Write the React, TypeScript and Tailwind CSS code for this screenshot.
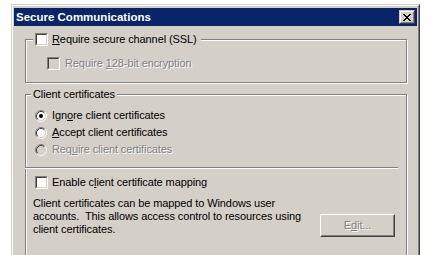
import React from "react";

const font = "font-['Liberation_Sans',Arial,sans-serif]";

function CheckBox({ disabled }: { disabled?: boolean }) {
  return (
    <div className="w-[13px] h-[13px] shrink-0 border border-t-[#808080] border-l-[#808080] border-r-white border-b-white">
      <div
        className={`w-full h-full border border-t-[#404040] border-l-[#404040] border-r-[#d4d0c8] border-b-[#d4d0c8] ${
          disabled ? "bg-[#d4d0c8]" : "bg-white"
        }`}
      />
    </div>
  );
}

function Radio({ checked, disabled }: { checked?: boolean; disabled?: boolean }) {
  return (
    <svg width="12" height="12" viewBox="0 0 12 12" className="shrink-0">
      <circle cx="6" cy="6" r="4.5" fill={disabled ? "#d4d0c8" : "#ffffff"} />
      <path d="M2.11 9.89 A5.5 5.5 0 0 1 9.89 2.11" fill="none" stroke="#808080" strokeWidth="1" />
      <path d="M9.89 2.11 A5.5 5.5 0 0 1 2.11 9.89" fill="none" stroke="#ffffff" strokeWidth="1" />
      <path d="M2.82 9.18 A4.5 4.5 0 0 1 9.18 2.82" fill="none" stroke="#404040" strokeWidth="1" />
      <path d="M9.18 2.82 A4.5 4.5 0 0 1 2.82 9.18" fill="none" stroke="#d4d0c8" strokeWidth="1" />
      {checked && <circle cx="6" cy="6" r="2" fill="#000000" />}
    </svg>
  );
}

// disabled (embossed) label text
const dim = "text-[#808080] [text-shadow:1px_1px_0_#ffffff]";

export default function App() {
  return (
    <div className={`w-[434px] h-[255px] overflow-hidden bg-white pt-[4px] pl-[11px] text-[11px] leading-[13px] tracking-[-0.1px] text-black ${font}`}>
      {/* window frame */}
      <div className="w-[409px] h-[270px] border border-t-[#d4d0c8] border-l-[#d4d0c8] border-r-[#404040] border-b-[#404040]">
        <div className="h-full border border-t-white border-l-white border-r-[#808080] border-b-[#808080] bg-[#d4d0c8] pt-[2px] px-[1px]">
          {/* title bar */}
          <div className="h-[18px] bg-[#0a246a] flex items-center justify-between pl-[2px] pr-[2px]">
            <span className="text-white font-bold text-[11.5px] tracking-normal">Secure Communications</span>
            <div className="w-[16px] h-[14px] border border-t-[#d4d0c8] border-l-[#d4d0c8] border-r-[#404040] border-b-[#404040]">
              <div className="w-full h-full bg-[#d4d0c8] border border-t-white border-l-white border-r-[#808080] border-b-[#808080] flex items-center justify-center">
                <svg width="8" height="7" viewBox="0 0 8 7" shapeRendering="crispEdges">
                  <path
                    fill="#000"
                    d="M0 0h2v1H0zM6 0h2v1H6zM1 1h2v1H1zM5 1h2v1H5zM2 2h4v1H2zM3 3h2v1H3zM2 4h4v1H2zM1 5h2v1H1zM5 5h2v1H5zM0 6h2v1H0zM6 6h2v1H6z"
                  />
                </svg>
              </div>
            </div>
          </div>

          {/* SSL group */}
          <div className="relative ml-[11px] mt-[13px] w-[382px] h-[44px] border border-[#808080] shadow-[inset_1px_1px_0_#ffffff,1px_1px_0_#ffffff]">
            <div className="absolute left-[7px] top-[-7px] h-[13px] flex items-center gap-[4px] pl-[2px] pr-[4px] bg-[#d4d0c8]">
              <CheckBox />
              <span>
                <u>R</u>equire secure channel (SSL)
              </span>
            </div>
            <div className="pt-[17px] pl-[21px] flex items-center gap-[5px] h-[30px]">
              <CheckBox disabled />
              <span className={dim}>
                Require <u>1</u>28-bit encryption
              </span>
            </div>
          </div>

          {/* client certificates group */}
          <div className="relative ml-[11px] mt-[11px] w-[382px] h-[200px] border border-[#808080] shadow-[inset_1px_1px_0_#ffffff,1px_1px_0_#ffffff]">
            <div className="absolute left-[5px] top-[-7px] h-[13px] px-[2px] bg-[#d4d0c8]">Client certificates</div>

            <div className="pt-[12px]">
              <div className="h-[17px] pl-[9px] flex items-center gap-[5px]">
                <Radio checked />
                <span>
                  Ign<u>o</u>re client certificates
                </span>
              </div>
              <div className="h-[17px] pl-[9px] flex items-center gap-[5px]">
                <Radio />
                <span>
                  <u>A</u>ccept client certificates
                </span>
              </div>
              <div className="h-[17px] pl-[9px] flex items-center gap-[5px]">
                <Radio disabled />
                <span className={dim}>
                  Req<u>u</u>ire client certificates
                </span>
              </div>
            </div>

            <div className="mt-[9px] -ml-[1px] w-[373px] h-[2px] border-t border-t-[#808080] border-b border-b-white" />

            <div className="mt-[7px] h-[13px] pl-[9px] flex items-center gap-[4px]">
              <CheckBox />
              <span>
                Enable c<u>l</u>ient certificate mapping
              </span>
            </div>

            <div className="mt-[8px] flex">
              <p className="w-[294px] pl-[7px] whitespace-pre">
                {"Client certificates can be mapped to Windows user\naccounts.  This allows access control to resources using\nclient certificates."}
              </p>
              <div className="mt-[17px] w-[75px] h-[23px] border border-t-white border-l-white border-r-[#404040] border-b-[#404040]">
                <div className={`w-full h-full border border-t-[#d4d0c8] border-l-[#d4d0c8] border-r-[#808080] border-b-[#808080] flex items-center justify-center ${dim}`}>
                  <span>
                    E<u>d</u>it...
                  </span>
                </div>
              </div>
            </div>
          </div>
        </div>
      </div>
    </div>
  );
}
